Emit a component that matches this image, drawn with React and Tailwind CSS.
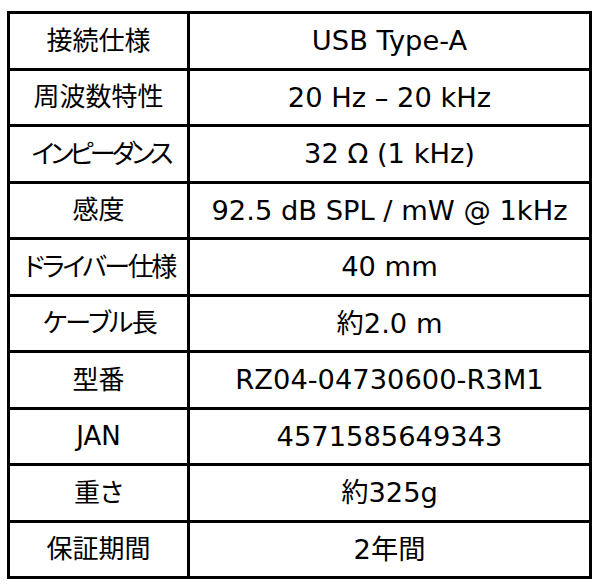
const specs = [
  ['接続仕様', 'USB Type-A', ''],
  ['周波数特性', '20 Hz – 20 kHz', ''],
  ['インピーダンス', '32 Ω (1 kHz)', 'tracking-[-3.9px] pl-[4px]'],
  ['感度', '92.5 dB SPL / mW @ 1kHz', ''],
  ['ドライバー仕様', '40 mm', 'tracking-[-2.4px] pl-[2px]'],
  ['ケーブル長', '約2.0 m', 'tracking-[-1.6px] pl-[2px]'],
  ['型番', 'RZ04-04730600-R3M1', ''],
  ['JAN', '4571585649343', ''],
  ['重さ', '約325g', ''],
  ['保証期間', '2年間', ''],
];

export default function App() {
  return (
    <div className="w-[600px] h-[587px] bg-white pt-[11px] pl-[7px] font-['DejaVu_Sans','Noto_Sans_CJK_JP',sans-serif] text-black">
      <div className="w-[585px] h-[568px] bg-black p-[3px] grid grid-cols-[177px_1fr] grid-rows-10 gap-[3px]">
        {specs.map(([label, value, fit]) => (
          <>
            <div key={label} className={`bg-white flex items-center justify-center text-[26px] leading-none whitespace-nowrap [font-feature-settings:'palt'] ${fit}`}>
              {label}
            </div>
            <div key={label + '-v'} className="bg-white flex items-center justify-center text-[27.3px] leading-none whitespace-nowrap">
              {value}
            </div>
          </>
        ))}
      </div>
    </div>
  );
}
